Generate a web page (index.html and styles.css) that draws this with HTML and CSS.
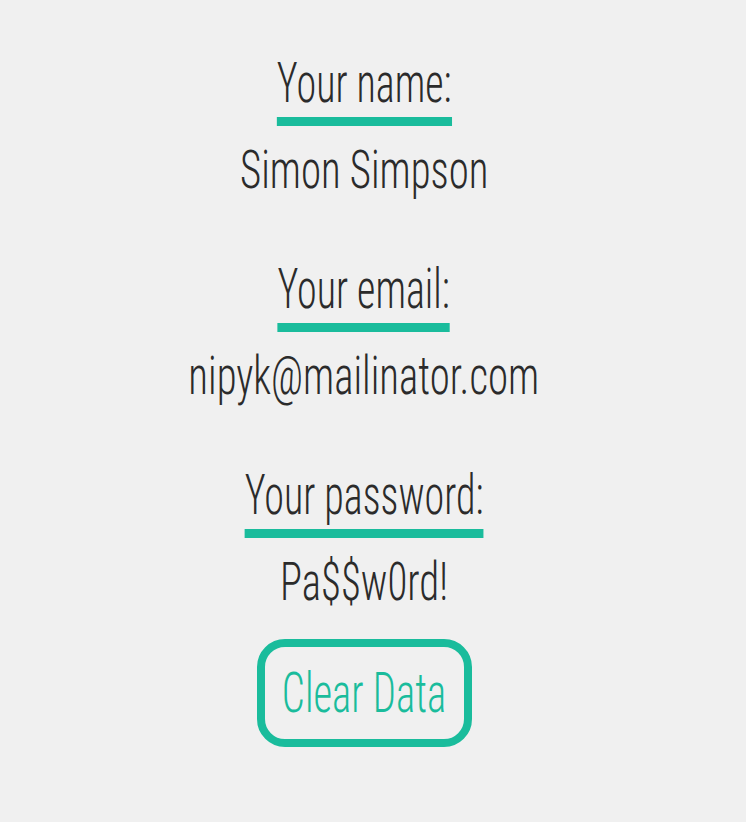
FILE: index.html
```
<!DOCTYPE html>
<html><head><meta charset="utf-8"><link rel="stylesheet" href="styles.css"></head>
<body>
<main class="card">
  <section class="field">
    <h2 class="label">Your name:</h2>
    <p class="value">Simon Simpson</p>
  </section>
  <section class="field">
    <h2 class="label">Your email:</h2>
    <p class="value">nipyk@mailinator.com</p>
  </section>
  <section class="field">
    <h2 class="label">Your password:</h2>
    <p class="value">Pa$$w0rd!</p>
  </section>
  <button class="clear"><span class="clear-text">Clear Data</span></button>
</main>
</body></html>
```
FILE: styles.css
```
html, body {
  margin: 0;
  background: #f0f0f0;
}
.card {
  display: flex;
  flex-direction: column;
  align-items: center;
  padding: 55px 18px 0 0;
  font-family: "Roboto Condensed", "Liberation Sans Narrow", sans-serif;
  font-weight: 300;
  color: #2b2b2b;
}
.field {
  display: flex;
  flex-direction: column;
  align-items: center;
  margin-bottom: 64px;
}
.field:last-of-type {
  margin-bottom: 30px;
}
.label {
  margin: 0;
  font-size: 56px;
  line-height: 56px;
  font-weight: 300;
  padding-bottom: 6px;
  border-bottom: 9px solid #1abc9c;
  transform: scaleX(0.715);
}
.value {
  margin: 18px 0 0;
  font-size: 53px;
  line-height: 53px;
  transform: scaleX(0.77);
  white-space: nowrap;
}
.clear {
  box-sizing: border-box;
  width: 215px;
  height: 108px;
  display: flex;
  align-items: center;
  justify-content: center;
  background: transparent;
  border: 8px solid #1abc9c;
  border-radius: 28px;
  color: #1abc9c;
  font-family: "Roboto Condensed", "Liberation Sans Narrow", sans-serif;
  font-weight: 300;
  font-size: 55px;
  padding: 0;
  overflow: visible;
}
.clear-text {
  display: inline-block;
  white-space: nowrap;
  transform: scaleX(0.74);
}
```
